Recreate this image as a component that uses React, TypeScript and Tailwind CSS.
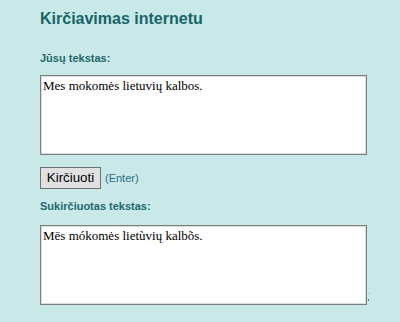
export default function App() {
  return (
    <div className="min-h-screen w-full bg-[#c9e8e8] pl-[40px] pt-[9px] font-['Liberation_Sans',Arial,sans-serif]">
      <h1 className="text-[16px] font-bold leading-[20px] text-[#17656a]">Kirčiavimas internetu</h1>

      <div className="mt-[22px] text-[11px] font-bold leading-[14px] text-[#22686d]">Jūsų tekstas:</div>
      <textarea
        className="mt-[10px] block h-[80px] w-[327px] resize-none border border-[#7d7d7d] bg-white px-[2px] py-[2px] font-['Liberation_Serif','Times_New_Roman',serif] text-[13px] leading-[15px] text-black shadow-[inset_0_0_0_1px_#dcdcdc] outline-none"
        defaultValue="Mes mokomės lietuvių kalbos."
      />

      <div className="mt-[12px] flex items-center gap-[4px]">
        <button className="h-[22px] w-[61px] border border-[#707070] bg-[#e1e1e1] text-[13.33px] leading-[16px] text-black">
          Kirčiuoti
        </button>
        <span className="text-[11px] text-[#2a6f86]">(Enter)</span>
      </div>

      <div className="mt-[10px] text-[11px] font-bold leading-[14px] text-[#22686d]">Sukirčiuotas tekstas:</div>
      <div className="mt-[12px] flex items-end">
        <textarea
          readOnly
          className="block h-[80px] w-[327px] resize-none border border-[#7d7d7d] bg-white px-[2px] py-[2px] font-['Liberation_Serif','Times_New_Roman',serif] text-[13px] leading-[15px] text-black shadow-[inset_0_0_0_1px_#dcdcdc] outline-none"
          defaultValue="Mēs mókomės lietùvių kalbõs."
        />
        <div className="mb-[4px] ml-[1px] flex flex-col gap-[5px]">
          <div className="h-[1px] w-[1px] bg-[#8fc0d0]" />
          <div className="h-[2px] w-[1px] bg-[#3d88b0]" />
        </div>
      </div>
    </div>
  );
}
